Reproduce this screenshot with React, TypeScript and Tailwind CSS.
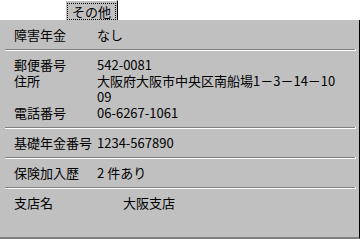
import React from 'react';

const rowLabel = 'w-[83px] shrink-0';

function Sep() {
  return (
    <div className="flex ml-[5px] mr-[3px]">
      <div className="flex-1 h-[2px] border-t border-t-[#808080] border-b border-b-white" />
      <div className="w-px h-[2px] bg-white" />
    </div>
  );
}

export default function App() {
  return (
    <div className="w-[361px] h-[239px] bg-white font-['Noto_Sans_CJK_JP',sans-serif] text-[13px] leading-[16px] text-black overflow-hidden">
      {/* tab strip */}
      <div className="h-[20px] pl-[65px] flex">
        <div className="w-[53px] h-[20px] bg-[#c0c0c0] border-l border-t border-white border-r border-r-black p-[1px]">
          <div className="h-[17px] mt-[1px] border border-dotted border-black flex items-center justify-center leading-none">
            その他
          </div>
        </div>
      </div>

      {/* page */}
      <div className="w-[360px] h-[219px] bg-[#c0c0c0] border-r border-r-black border-b-2 border-b-[#808080]">
        <div className="pt-[7px] pb-[6px] pl-[14px] flex">
          <span className={rowLabel}>障害年金</span>
          <span>なし</span>
        </div>
        <Sep />

        <div className="pt-[6px] pb-[6px] pl-[14px]">
          <div className="flex">
            <span className={rowLabel}>郵便番号</span>
            <span>542-0081</span>
          </div>
          <div className="flex">
            <span className={rowLabel}>住所</span>
            <span>
              大阪府大阪市中央区南船場1－3－14－10
              <br />
              09
            </span>
          </div>
          <div className="flex">
            <span className={rowLabel}>電話番号</span>
            <span>06-6267-1061</span>
          </div>
        </div>
        <Sep />

        <div className="pt-[6px] pb-[6px] pl-[14px] flex">
          <span className={rowLabel}>基礎年金番号</span>
          <span>1234-567890</span>
        </div>
        <Sep />

        <div className="pt-[6px] pb-[6px] pl-[14px] flex">
          <span className={rowLabel}>保険加入歴</span>
          <span>2 件あり</span>
        </div>
        <Sep />

        <div className="pt-[6px] pl-[14px] flex">
          <span className="w-[109px] shrink-0">支店名</span>
          <span>大阪支店</span>
        </div>
      </div>
    </div>
  );
}
